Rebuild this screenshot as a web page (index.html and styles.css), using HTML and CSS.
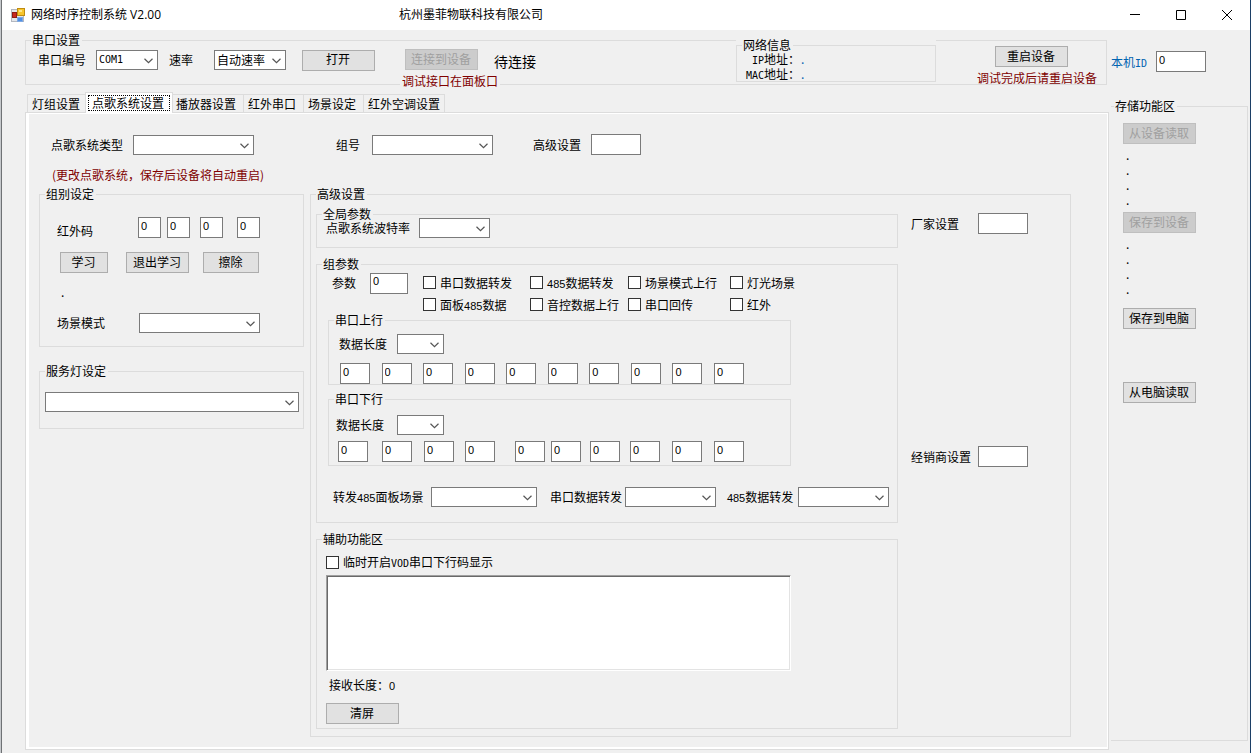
FILE: index.html
```html
<!DOCTYPE html>
<html lang="zh-CN">
<head>
<meta charset="utf-8">
<title>网络时序控制系统 V2.00</title>
<link rel="stylesheet" href="styles.css">
</head>
<body>
<div class="window">
  <header class="titlebar">
    <svg class="app-icon" width="14" height="14" viewBox="0 0 14 14" aria-hidden="true">
      <rect x="0.5" y="1.5" width="12" height="12" fill="#e4e6ea" stroke="#b4b8c0"/>
      <rect x="6.5" y="0.5" width="7" height="7" fill="#f7c52c" stroke="#c08c10"/>
      <rect x="8" y="2" width="3" height="2" fill="#fde68a"/>
      <rect x="1.5" y="4.5" width="4" height="5" fill="#c8281e" stroke="#8e1c14"/>
      <rect x="6.5" y="9.5" width="5" height="4" fill="#4f8fe6" stroke="#7fa8e0"/>
    </svg>
    <h1 class="title">网络时序控制系统 V2.00</h1>
    <span class="company">杭州墨菲物联科技有限公司</span>
    <div class="window-buttons">
      <button type="button" aria-label="最小化"><svg width="10" height="10" viewBox="0 0 10 10"><path d="M0 4.5H10" stroke="#000"/></svg></button>
      <button type="button" aria-label="最大化"><svg width="10" height="10" viewBox="0 0 10 10"><path d="M.5 .5H9.5V9.5H.5Z" fill="none" stroke="#000"/></svg></button>
      <button type="button" aria-label="关闭"><svg width="10" height="10" viewBox="0 0 10 10"><path d="M0 0L10 10M10 0L0 10" stroke="#000"/></svg></button>
    </div>
  </header>

  <div class="workspace">
    <main class="main">
      <fieldset class="group">
        <legend>串口设置</legend>
        <div class="connection">
          <div class="port">
            <label for="port">串口编号</label>
            <select id="port" class="w62 mono"><option>COM1</option></select>
            <label for="baud">速率</label>
            <select id="baud" class="w72"><option>自动速率</option></select>
            <button type="button" class="btn">打开</button>
          </div>
          <div class="connect">
            <button type="button" class="btn" disabled>连接到设备</button>
            <span class="warn">调试接口在面板口</span>
          </div>
          <output class="status">待连接</output>
          <div class="network">
            <fieldset class="group">
              <legend>网络信息</legend>
              <dl class="addresses">
                <dt><span class="mono">IP</span>地址：</dt><dd>.</dd>
                <dt><span class="mono">MAC</span>地址：</dt><dd>.</dd>
              </dl>
            </fieldset>
          </div>
          <div class="restart">
            <button type="button" class="btn">重启设备</button>
            <span class="warn">调试完成后请重启设备</span>
          </div>
        </div>
      </fieldset>

      <div class="tabs" role="tablist">
        <button type="button" role="tab" class="tab">灯组设置</button>
        <button type="button" role="tab" class="tab active" aria-selected="true"><span>点歌系统设置</span></button>
        <button type="button" role="tab" class="tab">播放器设置</button>
        <button type="button" role="tab" class="tab">红外串口</button>
        <button type="button" role="tab" class="tab">场景设定</button>
        <button type="button" role="tab" class="tab">红外空调设置</button>
      </div>

      <section class="panel" role="tabpanel">
        <div class="panel-inner">
          <div class="system-row">
            <label for="system">点歌系统类型</label>
            <select id="system" class="w121"><option></option></select>
            <label for="groupno">组号</label>
            <select id="groupno" class="w121"><option></option></select>
            <label for="adv">高级设置</label>
            <input id="adv" class="w50" type="text">
          </div>
          <p class="warn note">(更改点歌系统，保存后设备将自动重启)</p>

          <div class="columns">
            <div class="side-groups">
              <fieldset class="group">
                <legend>组别设定</legend>
                <div class="ir-code">
                  <span>红外码</span>
                  <div class="ir-fields">
                    <input type="text" value="0" aria-label="红外码 1">
                    <input type="text" value="0" aria-label="红外码 2">
                    <input type="text" value="0" aria-label="红外码 3">
                    <input type="text" value="0" aria-label="红外码 4">
                  </div>
                </div>
                <div class="ir-buttons">
                  <button type="button" class="btn w48">学习</button>
                  <button type="button" class="btn w63">退出学习</button>
                  <button type="button" class="btn w56">擦除</button>
                </div>
                <p class="ir-state">.</p>
                <div class="scene">
                  <label for="scene">场景模式</label>
                  <select id="scene" class="w121"><option></option></select>
                </div>
              </fieldset>
              <fieldset class="group">
                <legend>服务灯设定</legend>
                <div class="lamp"><select aria-label="服务灯设定"><option></option></select></div>
              </fieldset>
            </div>

            <fieldset class="group">
              <legend>高级设置</legend>
              <div class="advanced">
                <div class="stack">
                  <fieldset class="group">
                    <legend>全局参数</legend>
                    <div class="global">
                      <label for="vodbaud">点歌系统波特率</label>
                      <select id="vodbaud" class="w71"><option></option></select>
                    </div>
                  </fieldset>

                  <fieldset class="group">
                    <legend>组参数</legend>
                    <div class="params">
                      <label for="param">参数</label>
                      <input id="param" class="w38" type="text" value="0">
                      <div class="checks">
                        <label class="check"><input type="checkbox">串口数据转发</label>
                        <label class="check"><input type="checkbox"><span><span class="num">485</span>数据转发</span></label>
                        <label class="check"><input type="checkbox">场景模式上行</label>
                        <label class="check"><input type="checkbox">灯光场景</label>
                        <label class="check"><input type="checkbox"><span>面板<span class="num">485</span>数据</span></label>
                        <label class="check"><input type="checkbox">音控数据上行</label>
                        <label class="check"><input type="checkbox">串口回传</label>
                        <label class="check"><input type="checkbox">红外</label>
                      </div>
                    </div>

                    <div class="serial-groups">
                      <fieldset class="group">
                        <legend>串口上行</legend>
                        <div class="length up">
                          <label for="uplen">数据长度</label>
                          <select id="uplen" class="w47"><option></option></select>
                        </div>
                        <div class="bytes up">
                          <input type="text" value="0" aria-label="上行 1">
                          <input type="text" value="0" aria-label="上行 2">
                          <input type="text" value="0" aria-label="上行 3">
                          <input type="text" value="0" aria-label="上行 4">
                          <input type="text" value="0" aria-label="上行 5">
                          <input type="text" value="0" aria-label="上行 6">
                          <input type="text" value="0" aria-label="上行 7">
                          <input type="text" value="0" aria-label="上行 8">
                          <input type="text" value="0" aria-label="上行 9">
                          <input type="text" value="0" aria-label="上行 10">
                        </div>
                      </fieldset>
                      <fieldset class="group">
                        <legend>串口下行</legend>
                        <div class="length down">
                          <label for="downlen">数据长度</label>
                          <select id="downlen" class="w47"><option></option></select>
                        </div>
                        <div class="bytes down">
                          <input type="text" value="0" aria-label="下行 1">
                          <input type="text" value="0" aria-label="下行 2">
                          <input type="text" value="0" aria-label="下行 3">
                          <input type="text" value="0" aria-label="下行 4">
                          <input type="text" value="0" aria-label="下行 5">
                          <input type="text" value="0" aria-label="下行 6">
                          <input type="text" value="0" aria-label="下行 7">
                          <input type="text" value="0" aria-label="下行 8">
                          <input type="text" value="0" aria-label="下行 9">
                          <input type="text" value="0" aria-label="下行 10">
                        </div>
                      </fieldset>
                    </div>

                    <div class="forward">
                      <label for="fwdscene">转发<span class="num">485</span>面板场景</label>
                      <select id="fwdscene" class="w106"><option></option></select>
                      <label for="fwdserial">串口数据转发</label>
                      <select id="fwdserial" class="w91"><option></option></select>
                      <label for="fwd485"><span class="num">485</span>数据转发</label>
                      <select id="fwd485" class="w91"><option></option></select>
                    </div>
                  </fieldset>

                  <fieldset class="group">
                    <legend>辅助功能区</legend>
                    <div class="aux">
                      <label class="check"><input type="checkbox"><span>临时开启<span class="mono">VOD</span>串口下行码显示</span></label>
                      <textarea aria-label="下行码显示"></textarea>
                      <p class="received">接收长度：<output class="num">0</output></p>
                      <button type="button" class="btn">清屏</button>
                    </div>
                  </fieldset>
                </div>

                <div class="vendors">
                  <div class="vendor">
                    <label for="factory">厂家设置</label>
                    <input id="factory" class="w50" type="text">
                  </div>
                  <div class="vendor">
                    <label for="dealer">经销商设置</label>
                    <input id="dealer" class="w50" type="text">
                  </div>
                </div>
              </div>
            </fieldset>
          </div>
        </div>
      </section>
    </main>

    <aside class="sidebar">
      <div class="local-id">
        <label for="localid">本机<span class="mono">ID</span></label>
        <input id="localid" class="w50" type="text" value="0">
      </div>
      <fieldset class="group storage-group">
        <legend>存储功能区</legend>
        <div class="storage">
          <button type="button" class="btn" disabled>从设备读取</button>
          <div class="dots"><p>.</p><p>.</p><p>.</p><p>.</p></div>
          <button type="button" class="btn" disabled>保存到设备</button>
          <div class="dots"><p>.</p><p>.</p><p>.</p><p>.</p></div>
          <div class="computer">
            <button type="button" class="btn">保存到电脑</button>
            <button type="button" class="btn">从电脑读取</button>
          </div>
        </div>
      </fieldset>
    </aside>
  </div>
</div>
</body>
</html>
```
FILE: styles.css
```css
* { box-sizing: border-box; }

body {
  margin: 0;
  padding: 0 1px;
  background: linear-gradient(90deg, #c6c9cc 50%, #1c3f66 50%);
  color: #000;
  font: 12px/14px "Noto Sans CJK SC", sans-serif;
}

p, dl, dd, h1 { margin: 0; }
label, legend, .warn, .company, .title, .status, .tab { white-space: nowrap; }

.window {
  display: flex;
  flex-direction: column;
  min-height: 100vh;
  border-left: 1px solid #6f7275;
  background: #f0f0f0;
}

/* Title bar */
.titlebar {
  display: flex;
  align-items: center;
  height: 30px;
  padding-left: 9px;
  background: #fff;
  font-family: "Open Sans", "Noto Sans CJK SC", sans-serif;
}
.app-icon { margin-right: 6px; }
.title { width: 368px; font-size: 12px; font-weight: 400; }
.window-buttons { display: flex; margin-left: auto; }
.window-buttons button {
  display: flex;
  align-items: center;
  justify-content: center;
  width: 46px;
  height: 28px;
  padding: 0;
  border: 0;
  background: none;
}

/* Controls */
input[type="text"], select, textarea, button { font: inherit; color: inherit; border-radius: 0; }
input[type="text"] {
  height: 21px;
  margin: 0;
  padding: 0 2px 4px;
  border: 1px solid #7a7a7a;
  background: #fff;
  font: 11px/14px "Liberation Sans", "Noto Sans CJK SC", sans-serif;
}
select {
  appearance: none;
  height: 20px;
  margin: 0;
  padding: 0 0 0 2px;
  border: 1px solid #7a7a7a;
  background: #fff url("data:image/svg+xml,%3Csvg xmlns='http://www.w3.org/2000/svg' width='9' height='6'%3E%3Cpath d='M.5 .8L4.5 4.6L8.5 .8' fill='none' stroke='%23555' stroke-width='1.2'/%3E%3C/svg%3E") no-repeat right 4px top 7px;
}
.btn {
  width: 73px;
  height: 21px;
  padding: 0 1px 2px 0;
  border: 1px solid #adadad;
  background: #e1e1e1;
}
.btn:disabled { border-color: #bfbfbf; background: #ccc; color: #a0a0a0; }
.check { display: flex; align-items: center; gap: 4px; height: 14px; }
.check input {
  appearance: none;
  width: 13px;
  height: 13px;
  margin: 0;
  border: 1px solid #333;
  background: #fff;
}
.mono { font-family: "DejaVu Sans Mono", "Noto Sans CJK SC", monospace; font-size: 10px; line-height: 10px; }
select.mono { font-size: 10px; }
.num { font-family: "Liberation Sans", sans-serif; font-size: 11px; line-height: 11px; }
.warn { color: #800000; }

.w38 { width: 38px; }
.w47 { width: 47px; }
.w48 { width: 48px; }
.w50 { width: 50px; }
.w56 { width: 56px; }
.w62 { width: 62px; }
.w63 { width: 63px; }
.w71 { width: 71px; }
.w72 { width: 72px; }
.w91 { width: 91px; }
.w106 { width: 106px; }
.w121 { width: 121px; }

.group {
  min-width: 0;
  margin: 0;
  padding: 0;
  border: 1px solid #dcdcdc;
}
.group > legend { margin-left: 5px; padding: 0 2px 0 1px; }

/* Page frame */
.workspace {
  display: grid;
  flex: 1;
  grid-template-columns: minmax(0, 1fr) 137px;
  gap: 2px;
  padding: 3px 2px 3px 23px;
}
.main { display: flex; flex-direction: column; }
.main > .group { margin-right: 2px; }

/* Connection bar */
.connection { display: flex; align-items: center; height: 37px; padding: 0 9px 0 12px; }
.port { display: flex; align-items: center; padding-bottom: 11px; }
.port label[for="port"] { margin-right: 10px; }
.port label[for="baud"] { margin: 0 21px 0 11px; }
.port .btn { margin-left: 16px; }
.connect, .restart { display: flex; flex-direction: column; gap: 4px; }
.connect { align-self: flex-start; padding-top: 2px; margin-left: 25px; }
.connect .btn { margin-left: 5px; }
.connect .warn { padding: 0 2px; background: #f0f0f0; }
.status { padding-bottom: 10px; font-size: 14px; line-height: 16px; }
.connect + .status { margin-left: -6px; }
.network {
  align-self: flex-start;
  width: 200px;
  margin: -9px 0 0 auto;
  background: #f0f0f0;
}
.addresses {
  display: grid;
  grid-template-columns: 60px auto;
  row-gap: 1px;
  padding-left: 3px;
}
.addresses dt { text-align: right; }
.addresses dd { padding-left: 1px; color: #0063b1; }
.restart { margin-left: 41px; }
.restart .btn { margin-left: 18px; }

/* Tabs */
.tabs { display: flex; align-items: flex-end; margin-top: 7px; padding-left: 2px; }
.tab {
  height: 18px;
  padding: 0 7px 0 4px;
  border: solid #dcdcdc;
  border-width: 1px 0 0 1px;
  background: #f0f0f0;
}
.tab:last-child { padding-right: 4px; border-right-width: 1px; }
.tab.active {
  z-index: 1;
  height: 21px;
  margin: 0 -2px -1px;
  padding: 2px 2px 3px;
  border-width: 1px 1px 0;
  background: #fff;
}
.tab.active span {
  display: block;
  height: 16px;
  padding: 0 5px 0 3px;
  border: 1px dotted #000;
  line-height: 13px;
}
.panel { display: flex; flex: 1; border: 1px solid #dcdcdc; }
.panel-inner {
  display: flex;
  flex: 1;
  flex-direction: column;
  min-width: 0;
  padding: 20px 36px 10px 10px;
  border: solid #fff;
  border-width: 1px 1px 2px 3px;
}

/* Song system row */
.system-row { display: flex; align-items: center; padding-left: 12px; }
.system-row label[for="system"] { margin-right: 10px; }
.system-row label[for="groupno"] { margin: 0 12px 0 82px; }
.system-row label[for="adv"] { margin: 0 10px 0 40px; }
.note { padding: 13px 0 5px 13px; }
.columns {
  display: grid;
  flex: 1;
  grid-template-columns: 265px minmax(0, 1fr);
  gap: 6px;
}

/* Left groups */
.side-groups { display: flex; flex-direction: column; gap: 17px; }
.ir-code { display: flex; align-items: flex-end; padding: 16px 0 0 17px; }
.ir-code > span { width: 81px; }
.ir-fields { display: grid; grid-template-columns: 29px 33px 37px 23px; }
.ir-fields input { width: 23px; }
.ir-buttons { display: grid; grid-template-columns: 66px 77px 56px; padding: 14px 0 0 20px; }
.ir-state { padding: 12px 0 0 21px; }
.scene { display: flex; align-items: center; gap: 34px; padding: 14px 0 13px 17px; }
.lamp { display: flex; padding: 14px 4px 16px 5px; }
.lamp select { flex: 1; }

/* Advanced settings */
.advanced {
  display: grid;
  grid-template-columns: minmax(0, 1fr) 172px;
  padding: 6px 0 4px 5px;
}
.stack { display: flex; flex-direction: column; }
.global { display: flex; align-items: center; gap: 9px; margin-top: -3px; padding: 0 0 9px 9px; }
.stack > .group + .group { margin-top: 9px; }
.params { display: flex; align-items: center; height: 42px; padding-left: 15px; }
.params > label, .params > input { margin-bottom: 18px; }
.params > input { margin-left: 14px; }
.checks {
  display: grid;
  grid-template-columns: 107px 98px 102px auto;
  row-gap: 8px;
  margin: 3px 0 0 15px;
}
.serial-groups { display: grid; gap: 7px; width: 463px; margin-left: 11px; }
.length { display: flex; align-items: center; gap: 10px; }
.length.up { padding: 7px 0 0 10px; }
.length.down { gap: 13px; padding: 9px 0 0 7px; }
.bytes { display: grid; }
.bytes input { width: 30px; }
.bytes.up { grid-template-columns: repeat(9, 1fr) 30px; padding: 9px 46px 0 11px; }
.bytes.down {
  grid-template-columns: 44px 42px 41px 50px 36px 39px 40px 42px 42px 30px;
  padding: 6px 0 3px 9px;
}
.forward { display: flex; align-items: center; padding: 21px 8px 15px 16px; }
.forward label[for="fwdscene"] { margin-right: 8px; }
.forward label[for="fwdserial"] { margin: 0 3px 0 13px; }
.forward label[for="fwd485"] { margin: 0 5px 0 11px; }
.aux { display: flex; flex-direction: column; align-items: flex-start; padding: 9px 9px 4px; }
.aux textarea {
  width: 465px;
  height: 96px;
  margin: 6px 0 7px;
  border: 1px solid;
  border-color: #a0a0a0 #fff #fff #a0a0a0;
  background: #fff;
  box-shadow: inset 1px 1px #696969, inset -1px -1px #e3e3e3;
  resize: none;
}
.received { padding: 0 0 11px 3px; }
.vendors { display: flex; flex-direction: column; gap: 212px; padding: 6px 42px 0 0; }
.vendor { display: flex; align-items: center; justify-content: flex-end; gap: 7px; }
.vendor label { min-width: 60px; }

/* Sidebar */
.sidebar { display: flex; flex-direction: column; gap: 27px; padding: 18px 0 9px; }
.local-id { display: flex; align-items: center; gap: 9px; color: #0063b1; }
.local-id input { color: #000; }
.storage-group { flex: 1; border-left: 0; }
.storage-group > legend { margin-left: 3px; }
.storage { padding: 10px 12px; }
.dots { padding: 3px 0 5px 3px; line-height: 15px; }
.computer { display: grid; gap: 53px; padding-top: 7px; }
```
